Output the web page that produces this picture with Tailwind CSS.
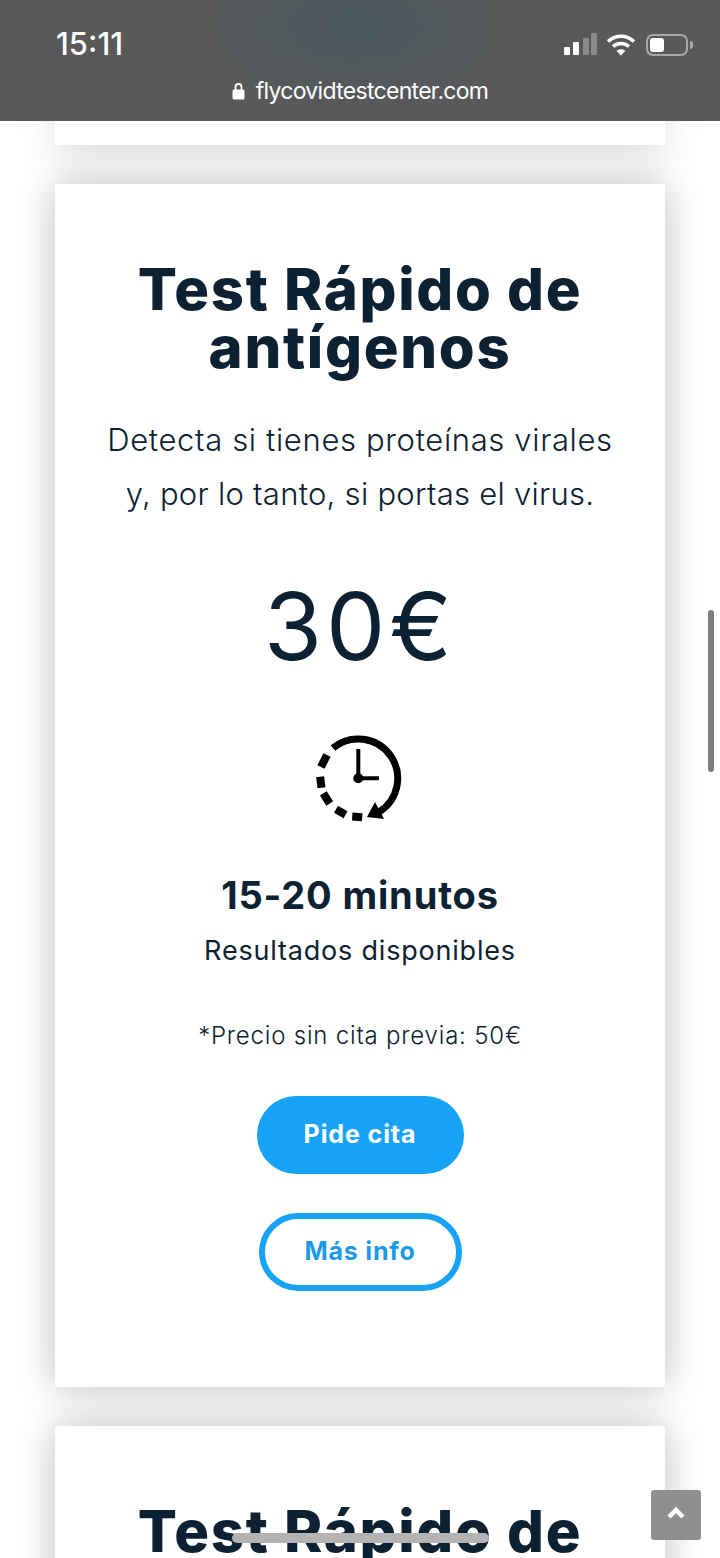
<!DOCTYPE html>
<html lang="es">
<head>
  <meta charset="UTF-8">
  <meta name="viewport" content="width=device-width, initial-scale=1">
  <title>Fly Covid Test Center</title>
  <script src="https://cdn.jsdelivr.net/npm/@tailwindcss/browser@4"></script>
</head>
<body class="bg-white font-['Inter',sans-serif] text-[#0c2233]">
<div class="relative h-[1558px] w-[720px] overflow-hidden">

  <!-- Browser bar -->
  <header class="relative z-20 h-[121px] bg-[#595959] bg-[radial-gradient(ellipse_170px_90px_at_355px_25px,#4a5960,#595959)] text-white">
    <div class="flex items-center justify-between pl-[56px] pr-[27px] pt-[26px] h-[62px]">
      <span class="text-[31px] leading-[34px] font-medium">15:11</span>
      <div class="flex items-center pt-[1px]">
        <svg width="34" height="24" viewBox="0 0 34 24">
          <rect x="0" y="14" width="6" height="8" rx="1" fill="#fff"/>
          <rect x="9" y="9" width="6" height="13" rx="1" fill="#fff"/>
          <rect x="19" y="5" width="6" height="17" rx="1" fill="#8a8a8a"/>
          <rect x="27" y="0" width="6" height="22" rx="1" fill="#8a8a8a"/>
        </svg>
        <svg class="ml-[8px]" width="30" height="24" viewBox="0 0 30 24" fill="none" stroke="#fff" stroke-width="3.6">
          <path d="M2 8.5C9.5 1.5 20.500 1.500 28 8.500"/>
          <path d="M7 13.500C11.500 9.500 18.500 9.500 23 13.500"/>
          <path d="M15 22.500L10.500 17.800C13 15.600 17 15.600 19.500 17.800Z" fill="#fff" stroke="none"/>
        </svg>
        <div class="ml-[10px] flex items-center">
          <div class="h-[22px] w-[42px] rounded-[7px] border-2 border-[#a8a8a8] p-[2px]">
            <div class="h-full w-[14px] rounded-[3px] bg-white"></div>
          </div>
          <div class="ml-[2px] h-[8px] w-[3px] rounded-r-full bg-[#a8a8a8]"></div>
        </div>
      </div>
    </div>
    <div class="flex items-center justify-center gap-[11px] pt-[15px] text-[23px] leading-[28px]">
      <svg width="13" height="18" viewBox="0 0 13 18">
        <path d="M3.500 8V5a3 3 0 0 1 6 0v3" fill="none" stroke="#fff" stroke-width="1.800"/>
        <rect x="0.500" y="7.500" width="12" height="10" rx="1.500" fill="#fff"/>
      </svg>
      <span class="tracking-[-0.7px]">flycovidtestcenter.com</span>
    </div>
  </header>

  <main class="mx-[55px] flex w-[610px] flex-col gap-[39px]">
    <!-- End of previous card -->
    <div class="h-[24px] rounded-b-[2px] bg-white shadow-[0_0_40px_rgba(0,0,0,0.25)]"></div>

    <!-- Antigen test card -->
    <section class="relative flex h-[1203px] flex-col items-center rounded-[2px] bg-white pt-[76px] text-center shadow-[0_0_40px_rgba(0,0,0,0.25)]">
      <h2 class="text-[58px] leading-[58px] font-extrabold tracking-[1.7px]">Test Rápido de<br>antígenos</h2>
      <p class="mt-[37px] text-[31px] leading-[54px] font-light tracking-[0.65px]">Detecta si tienes proteínas virales<br><span class="tracking-[0.28px]">y, por lo tanto, si portas el virus.</span></p>
      <p class="mt-[52px] text-[94px] leading-[106px] font-normal tracking-[4px]">30€</p>
      <svg class="mt-[41px]" width="120" height="110" viewBox="0 0 120 110" fill="none" stroke="#000">
        <path d="M33 28A39.500 39.500 0 1 1 79 92" stroke-width="7"/>
        <path d="M67 97L75 82L84 99Z" fill="#000" stroke="none"/>
        <g stroke-width="8">
          <path d="M21 47L27 35"/>
          <path d="M21.500 67.800L20.100 56.800"/>
          <path d="M23.300 73.300L29.700 83.500"/>
          <path d="M36 89.300L45.600 94.700"/>
          <path d="M52.200 96.600L62.200 97.200"/>
        </g>
        <path d="M58.300 29V58.300H79" stroke-width="4"/>
        <circle cx="58.300" cy="58.300" r="5" fill="#000" stroke="none"/>
      </svg>
      <p class="mt-[43px] text-[38px] leading-[44px] font-bold tracking-[0.85px]">15-20 minutos</p>
      <p class="mt-[17px] text-[27px] leading-[34px] tracking-[0.8px]">Resultados disponibles</p>
      <p class="mt-[53px] text-[24px] leading-[30px] font-light tracking-[0.8px]">*Precio sin cita previa: 50€</p>
      <a class="mt-[45px] flex h-[78px] w-[207px] items-center justify-center rounded-full bg-[#16a3f5] text-[25px] font-bold tracking-[0.9px] text-white">Pide cita</a>
      <a class="mt-[39px] flex h-[78px] w-[203px] items-center justify-center rounded-full border-[6px] border-[#16a3f5] bg-white text-[25px] font-bold tracking-[0.8px] text-[#1b9be6]">Más info</a>
    </section>

    <!-- Next card, cut off by the viewport -->
    <section class="flex h-[300px] flex-col items-center rounded-[2px] bg-white pt-[76px] text-center shadow-[0_0_40px_rgba(0,0,0,0.25)]">
      <h2 class="text-[58px] leading-[58px] font-extrabold tracking-[1.7px]">Test Rápido de</h2>
    </section>
  </main>

  <!-- Page scrollbar -->
  <div class="absolute left-[708px] top-[610px] h-[162px] w-[6px] rounded-full bg-[#7d7d7d]"></div>
  <!-- Back to top button -->
  <button class="absolute left-[651px] top-[1490px] flex h-[50px] w-[50px] items-center justify-center rounded-[3px] bg-[#8f8f8f]">
    <svg class="-mt-[4px]" width="18" height="12" viewBox="0 0 18 12" fill="none" stroke="#fff" stroke-width="4.500"><path d="M2 10L9 3L16 10"/></svg>
  </button>
  <!-- Home indicator -->
  <div class="absolute left-[232px] top-[1533px] h-[10px] w-[257px] rounded-full bg-[#b3b3b3]"></div>
</div>
</body>
</html>
